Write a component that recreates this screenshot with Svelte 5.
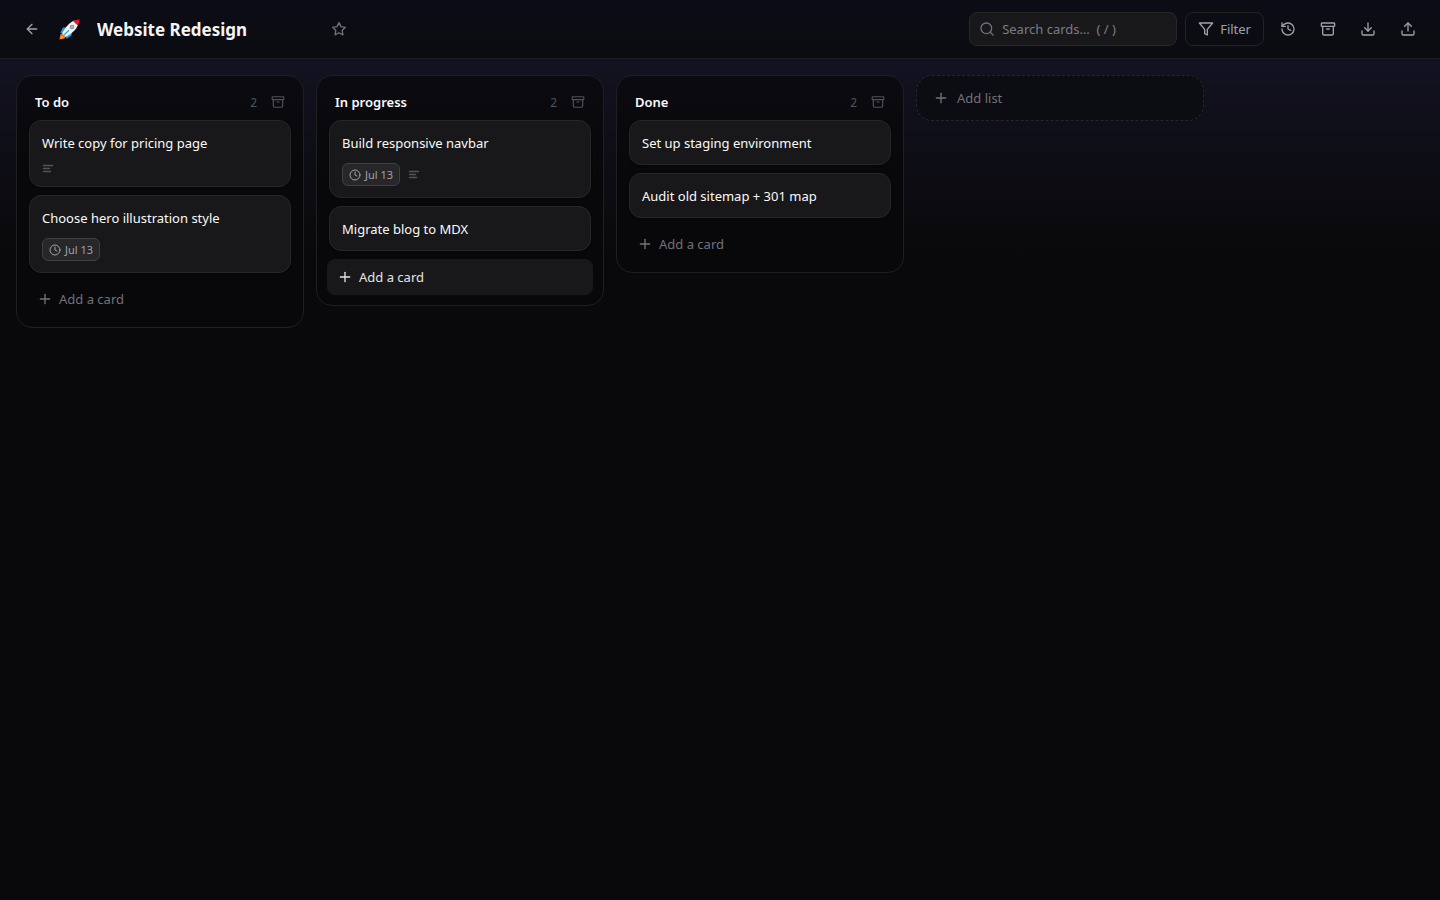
<script>
  // Board data
  let title = $state('Website Redesign');
  let search = $state('');

  let lists = $state([
    {
      name: 'To do',
      cards: [
        { title: 'Write copy for pricing page', description: true },
        { title: 'Choose hero illustration style', due: 'Jul 13' }
      ]
    },
    {
      name: 'In progress',
      active: true,
      cards: [
        { title: 'Build responsive navbar', due: 'Jul 13', description: true },
        { title: 'Migrate blog to MDX' }
      ]
    },
    {
      name: 'Done',
      cards: [
        { title: 'Set up staging environment' },
        { title: 'Audit old sitemap + 301 map' }
      ]
    }
  ]);

  // Stroke icons on a 24x24 grid
  const icons = {
    back: ['m12 19-7-7 7-7', 'M19 12H5'],
    star: ['M12 2.5l2.95 6 6.6.96-4.78 4.65 1.13 6.57L12 17.58l-5.9 3.1 1.13-6.57L2.45 9.46l6.6-.96z'],
    search: ['M19 11a8 8 0 1 1-16 0 8 8 0 0 1 16 0z', 'm21 21-4.3-4.3'],
    filter: ['M22 3H2l8 9.46V19l4 2v-8.54L22 3z'],
    history: ['M3 12a9 9 0 1 0 9-9 9.75 9.75 0 0 0-6.74 2.74L3 8', 'M3 3v5h5', 'M12 7v5l4 2'],
    archive: ['M3 3h18a1 1 0 0 1 1 1v3a1 1 0 0 1-1 1H3a1 1 0 0 1-1-1V4a1 1 0 0 1 1-1z', 'M4 8v11a2 2 0 0 0 2 2h12a2 2 0 0 0 2-2V8', 'M10 12h4'],
    download: ['M21 15v4a2 2 0 0 1-2 2H5a2 2 0 0 1-2-2v-4', 'm7 10 5 5 5-5', 'M12 15V3'],
    upload: ['M21 15v4a2 2 0 0 1-2 2H5a2 2 0 0 1-2-2v-4', 'm17 8-5-5-5 5', 'M12 3v12'],
    plus: ['M5 12h14', 'M12 5v14'],
    clock: ['M22 12a10 10 0 1 1-20 0 10 10 0 0 1 20 0z', 'M12 6v6l4 2'],
    text: ['M21 5H3', 'M15 11H3', 'M17 17H3']
  };

  const actions = [
    { icon: 'history', label: 'Activity' },
    { icon: 'archive', label: 'Archived items' },
    { icon: 'download', label: 'Export board' },
    { icon: 'upload', label: 'Import board' }
  ];
</script>

{#snippet icon(name, size = 16, stroke = 2)}
  <svg
    width={size}
    height={size}
    viewBox="0 0 24 24"
    fill="none"
    stroke="currentColor"
    stroke-width={stroke}
    stroke-linecap="round"
    stroke-linejoin="round"
    aria-hidden="true"
  >
    {#each icons[name] as d}
      <path {d} />
    {/each}
  </svg>
{/snippet}

<div class="page">
  <header class="topbar">
    <button class="icon-btn" aria-label="Back to boards">{@render icon('back')}</button>
    <button class="emoji-btn" aria-label="Board icon">
      <svg width="22" height="22" viewBox="0 0 22 22" aria-hidden="true">
        <path d="M1.5 21.5 2.4 16.4 5 15 8.2 18 6.6 20.5z" fill="#f7791e" />
        <path d="M2 21 3.6 17.8 5.4 19.4z" fill="#ffb02e" />
        <path d="M2.2 14.8 5 9.4 10 9.2 5.6 15.6z" fill="#1b9de2" />
        <path d="M8.4 20.8 13.6 17.4 13.6 13 7.4 17.4z" fill="#1b9de2" />
        <path d="M4.2 15.6C7 9.6 11.6 4.4 16.4 2.6L20.2 6.4C18.4 11.4 13.4 16 7.4 18.8z" fill="#f1f2f5" />
        <path d="M15.2 3.2C17.2 2 19.4 1.5 21.5 1.5 21.5 3.5 21 5.6 19.8 7.6z" fill="#e3182d" />
        <circle cx="14" cy="9" r="2.3" fill="#8d9199" />
        <circle cx="14" cy="9" r="1.3" fill="#b4b8bf" />
        <path d="M6 17 10.6 12.4" stroke="#28aeea" stroke-width="1.4" stroke-linecap="round" />
      </svg>
    </button>
    <input class="board-title" aria-label="Board title" bind:value={title} />
    <button class="icon-btn star" aria-label="Star board">{@render icon('star')}</button>

    <div class="tools">
      <label class="search">
        {@render icon('search')}
        <input type="text" aria-label="Search cards" placeholder="Search cards…  ( / )" bind:value={search} />
      </label>
      <button class="filter-btn">{@render icon('filter')}Filter</button>
      {#each actions as action}
        <button class="icon-btn" aria-label={action.label}>{@render icon(action.icon)}</button>
      {/each}
    </div>
  </header>

  <main class="board">
    {#each lists as list}
      <section class="list">
        <div class="list-header">
          <h2>{list.name}</h2>
          <span class="count">{list.cards.length}</span>
          <button class="archive-btn" aria-label="Archive list">{@render icon('archive', 14)}</button>
        </div>

        <div class="cards">
          {#each list.cards as card}
            <article class="card">
              <h3>{card.title}</h3>
              {#if card.due || card.description}
                <div class="meta">
                  {#if card.due}
                    <span class="due">{@render icon('clock', 12)}{card.due}</span>
                  {/if}
                  {#if card.description}
                    {@render icon('text', 12, 3)}
                  {/if}
                </div>
              {/if}
            </article>
          {/each}
        </div>

        <div class="list-footer">
          <button class="add-card" class:active={list.active}>{@render icon('plus')}Add a card</button>
        </div>
      </section>
    {/each}

    <button class="add-list">{@render icon('plus')}Add list</button>
  </main>
</div>

<style>
  :global(body) {
    margin: 0;
    background: #09090b;
  }

  .page {
    min-height: 100vh;
    display: flex;
    flex-direction: column;
    background: linear-gradient(180deg, #151428 0, #131221 60px, #0d0d15 160px, #09090b 260px);
    color: #fafafa;
    font-family: 'Segoe UI', 'Noto Sans', 'Open Sans', sans-serif;
    font-size: 13px;
  }

  svg {
    display: block;
    flex-shrink: 0;
  }

  button,
  input {
    box-sizing: border-box;
    margin: 0;
    padding: 0;
    border: none;
    background: none;
    font: inherit;
    color: inherit;
  }

  button {
    display: flex;
    align-items: center;
    cursor: pointer;
  }

  input:focus {
    outline: none;
  }

  /* Top bar */
  .topbar {
    display: flex;
    align-items: center;
    gap: 8px;
    padding: 12px 16px;
    border-bottom: 1px solid #1e1e21;
    background: linear-gradient(180deg, #0c0c16, #0b0c10);
  }

  .icon-btn {
    width: 32px;
    height: 32px;
    justify-content: center;
    border-radius: 8px;
    color: #a1a1aa;
  }

  .icon-btn.star {
    color: #71717a;
  }

  .emoji-btn {
    width: 25px;
    height: 32px;
    justify-content: center;
  }

  .board-title {
    width: 226px;
    height: 32px;
    padding: 0 8px;
    border-radius: 8px;
    font-size: 17px;
    font-weight: 700;
    color: #f4f4f5;
  }

  .tools {
    display: flex;
    align-items: center;
    gap: 8px;
    margin-left: auto;
  }

  .search {
    box-sizing: border-box;
    width: 208px;
    height: 34px;
    display: flex;
    align-items: center;
    gap: 7px;
    padding: 0 9px;
    border: 1px solid #27272a;
    border-radius: 8px;
    background: #18181b;
    color: #71717a;
  }

  .search input {
    flex: 1;
    min-width: 0;
    color: #fafafa;
    white-space: pre;
  }

  .search input::placeholder {
    color: #7c7c80;
    opacity: 1;
  }

  .filter-btn {
    height: 34px;
    gap: 6px;
    padding: 0 12px;
    border: 1px solid #232326;
    border-radius: 8px;
    color: #a1a1aa;
  }

  /* Board */
  .board {
    flex: 1;
    display: flex;
    align-items: flex-start;
    gap: 12px;
    padding: 16px;
    overflow-x: auto;
  }

  .list {
    box-sizing: border-box;
    width: 288px;
    flex-shrink: 0;
    border: 1px solid #1f1f22;
    border-radius: 16px;
    background: linear-gradient(180deg, #0a0a10, #08080a 120px);
  }

  .list-header {
    display: flex;
    align-items: center;
    gap: 9px;
    padding: 14px 13px 6px 18px;
  }

  .list-header h2 {
    flex: 1;
    margin: 0;
    font-size: 13px;
    font-weight: 600;
  }

  .count {
    font-size: 12px;
    color: #52525b;
  }

  .archive-btn {
    width: 24px;
    height: 24px;
    justify-content: center;
    color: #52525b;
  }

  .cards {
    display: flex;
    flex-direction: column;
    gap: 8px;
    padding: 0 12px;
  }

  .card {
    padding: 13px 12px 11px;
    border: 1px solid #27272a;
    border-radius: 12px;
    background: #18181b;
    box-shadow: 0 1px 2px rgba(0, 0, 0, 0.4);
  }

  .card h3 {
    margin: 0;
    font-size: 13px;
    line-height: 19px;
    font-weight: 400;
  }

  .meta {
    display: flex;
    align-items: center;
    gap: 8px;
    margin-top: 10px;
    color: #52525b;
  }

  .due {
    box-sizing: border-box;
    height: 23px;
    display: flex;
    align-items: center;
    gap: 4px;
    padding: 0 6px;
    border: 1px solid #3f3f46;
    border-radius: 6px;
    background: #27272a;
    font-size: 11px;
    color: #a1a1aa;
  }

  .list-footer {
    padding: 8px 10px 10px;
  }

  .add-card {
    width: 100%;
    height: 36px;
    gap: 6px;
    padding: 0 10px;
    border-radius: 8px;
    color: #71717a;
  }

  .add-card:hover,
  .add-card.active {
    background: #18181b;
    color: #e4e4e7;
  }

  .add-list {
    width: 288px;
    height: 46px;
    flex-shrink: 0;
    gap: 8px;
    padding: 0 16px;
    border: 1px dashed #27272a;
    border-radius: 16px;
    background: #0c0c13;
    color: #71717a;
  }
</style>
